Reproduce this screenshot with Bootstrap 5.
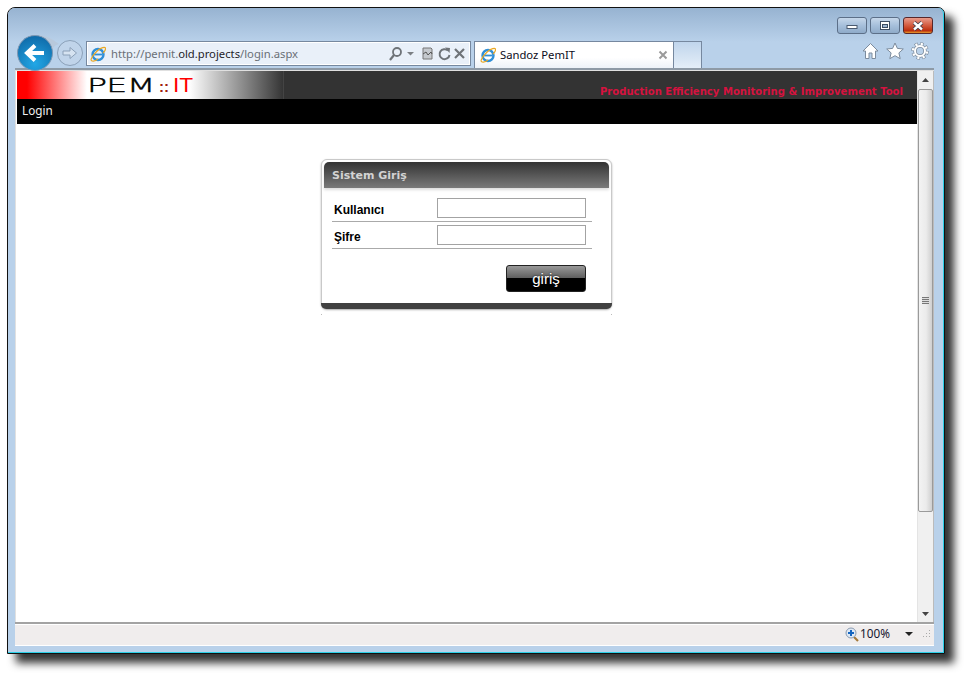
<!DOCTYPE html>
<html lang="tr"><head><meta charset="utf-8"><title>Sandoz PemIT</title>
<link rel="stylesheet" href="https://cdn.jsdelivr.net/npm/bootstrap@5.3.0/dist/css/bootstrap.min.css">
<style>
html,body{height:100%;overflow:hidden;background:#fff}
body{padding:7px 0 0 7px;font-family:"Noto Sans","Open Sans",sans-serif;font-size:12px}
.win{width:938px;height:647px;border:1px solid #111;border-radius:8px 7px 0 0;box-shadow:9px 9px 8px rgba(0,0,0,.8);background:#b9d1ea}
.win-in{height:100%;border-right:1px solid #2bd0e8;border-bottom:1px solid #2bd0e8;border-radius:7px 6px 0 0;background:linear-gradient(#97b3d1,#b9d1ea 34px);padding-left:7px;padding-right:9px}
.titlerow{height:26px;padding:9px 1px 0 0;gap:3px}
.wbtn{height:17px;width:30px;border:1px solid #5c6f88;border-radius:3px;background:linear-gradient(#c6d7ea,#a6bfdb 50%,#8fabc9)}
.wbtn-x{border-color:#57272a;background:linear-gradient(#e89b8b,#d35a3e 50%,#bb2d0d 85%,#e8a02e)}
.navrow{height:34px;padding-left:2px}
.backb{width:36px;height:36px;margin-top:1px;flex:none;z-index:3;overflow:visible}
.fwd{width:26px;height:26px;margin:6px 3px 0 4px;flex:none;z-index:2}
.addr{width:385px;height:25px;margin-top:7px;border:1px solid #76889f;background:#e9f0f9;box-shadow:inset 0 0 0 1px #fff;padding:0 4px 0 3px}
.addr-t{color:#6a6f76;font-size:11.25px;margin-left:5px;padding-top:2px}
.addr-t b{color:#1f2329;font-weight:400}
.tabx{width:200px;height:27px;margin:7px 0 0 3px;border:1px solid #76889f;border-bottom:0;background:linear-gradient(#fff,#fff 60%,#edf2f8);padding:0 5px 0 5px;color:#0b0b20;font-size:11.25px}
.tab-new{width:29px;height:27px;margin-top:7px;margin-left:-1px;border:1px solid #76889f;border-bottom:0;background:linear-gradient(#c0d5ec,#e4eef8)}
.tools{gap:7px;padding:8px 5px 0 0}
.pagerow{height:554px;border-top:2px solid #8e9aa6;padding-top:1px;background:#e0e0e0}
.pg{flex:1;background:#fff;margin-left:1px;min-width:0;padding-left:1px}
.hdr{height:28px;background:#333}
.hdr-logo{width:267px;height:28px;flex:none;background:linear-gradient(90deg,#f00 0,#f00 10px,#fff 70px,#fff 172px,#333 267px);border-right:1px solid #444;padding-left:70px}
.pem{font-family:"DejaVu Sans",sans-serif;font-weight:200;font-size:20px;line-height:28px;color:#000;display:inline-block;width:65px;white-space:nowrap;vertical-align:top}
.pem span{display:inline-block;transform:scaleX(1.66);transform-origin:0 50%;-webkit-text-stroke:.4px #000;letter-spacing:-.4px}
.dots{color:#a02010;font:700 15px/32px "Liberation Sans",sans-serif;margin-left:7px;width:14px;display:inline-block;vertical-align:top}
.it{color:#f00;font:400 21px/28px "Liberation Sans",sans-serif;display:inline-block;transform:scaleX(1.08);transform-origin:0 50%;vertical-align:top}
.slogan{color:#d6123f;font:700 10.07px/1 "DejaVu Sans",Verdana,sans-serif;padding:16px 14px 0 0}
.menu{height:25px;background:#000;color:#eee;padding:0 0 2px 5px;font-size:11.75px}
.box{width:291px;height:150px;margin:35px 0 0 304px;border:1px solid #c9c9c9;border-radius:6px;padding:2px;background:#fff;box-shadow:0 1px 2px #aaa}
.box::after{content:"";position:absolute;left:-1px;right:-1px;bottom:-7px;height:1px;background:linear-gradient(90deg,#bbb 1px,transparent 1px,transparent calc(100% - 1px),#bbb 1px)}
.box-h{height:26px;border:0;border-radius:5px 5px 0 0;background:linear-gradient(#333,#7a7a7a);color:#d3d3d3;font:700 11px/28px "DejaVu Sans",sans-serif;padding:0 8px;box-shadow:0 2px 3px #ddd}
.box-b{padding:10px 17px 0 8px;height:114px;background:transparent;border:0;flex:none}
.frow{height:27px;border-bottom:1px solid #aaa;padding-left:2px;align-items:flex-start}
.frow label{width:103px;font:700 12px/1 "Liberation Sans",sans-serif;color:#000;padding-top:6px}
.inp{width:149px;height:20px;border:1px solid #a3a3a3;border-radius:0;padding:0;min-height:0;flex:none;background:#fff}
.frow:first-child{height:24px}
.frow:nth-child(2) .inp{margin-top:3px}
.frow:nth-child(2) label{padding-top:9px}
.gobtn{display:block;margin:16px 0 0 174px;width:80px;height:27px;padding:0;border:1px solid #222;border-radius:3px;background:linear-gradient(#999,#5c5c5c 50%,#000 50%,#000);color:#fff;font:400 15px/1 "Liberation Sans",sans-serif;text-shadow:0 0 2px #000}
.box-f{height:6px;position:absolute;left:-1px;right:-1px;bottom:-1px;background:#414141;border-radius:0 0 6px 6px;border:0;padding:0}
.sbar{width:17px;background:#f0f0f0;flex:none;border-left:1px solid #e4e4e4;border-right:1px solid #bbb;align-items:center}
.sb-up{height:17px;flex:none}
.thumb{width:15px;height:423px;margin-top:1px;flex:none;border:1px solid #9a9a9a;border-radius:2px;background:linear-gradient(90deg,#f3f3f3,#ebebeb 55%,#cfcfcf)}
.grip{width:7px;height:7px;background:repeating-linear-gradient(#777 0,#777 1px,#ddd 1px,#ddd 2px)}
.status{height:24px;border-top:2px solid #a3a3a3;background:#f0eded;box-shadow:inset 0 1px 0 #fff,inset 0 -1px 0 #fff;font-size:11.75px;color:#15152f;padding:0 3px 2px 0}
.status-z{gap:1px;margin-right:15px}
.car{margin-right:8px}
</style></head><body>
<div class="win"><div class="win-in d-flex flex-column">
 <div class="titlerow d-flex justify-content-end">
  <div class="wbtn d-flex align-items-center justify-content-center"><svg width="14" height="8"><rect x="2" y="3.500" width="10" height="3" fill="#fff" stroke="#4a5a70"/></svg></div>
  <div class="wbtn d-flex align-items-center justify-content-center"><svg width="12" height="9"><rect x="1.500" y=".5" width="9" height="8" fill="#fff" stroke="#3d4d63"/><rect x="3.500" y="3.500" width="5" height="3" fill="#9db6d2" stroke="#3d4d63"/></svg></div>
  <div class="wbtn wbtn-x d-flex align-items-center justify-content-center"><svg width="14" height="10"><path d="M3 1.500 11 8.500M11 1.500 3 8.500" stroke="#3a3a4a" stroke-width="4"/><path d="M3 1.500 11 8.500M11 1.500 3 8.500" stroke="#fff" stroke-width="2.400"/></svg></div>
 </div>
 <div class="navrow d-flex align-items-start">
  <svg class="backb" viewBox="0 0 36 36"><defs><radialGradient id="bg" cx=".5" cy=".8" r=".8"><stop offset="0" stop-color="#22a7e6"/><stop offset="1" stop-color="#0f6aa8"/></radialGradient></defs><path d="M18 0C28 0 34 3 42 9 38 10 36 12 35 16z" fill="#b8c9dc"/><circle cx="18" cy="18" r="17.500" fill="url(#bg)" stroke="#7f98b3"/><path d="M27 18H12M18 10.500 10 18l8 7.500" fill="none" stroke="#fff" stroke-width="4"/></svg>
  <svg class="fwd" viewBox="0 0 26 26"><circle cx="13" cy="13" r="12.500" fill="#c0d4ea" stroke="#8ba0b8"/><path d="M6 11h7V7.500L19.500 13 13 18.500V15H6z" fill="#d6e3f1" stroke="#8ba0b8"/></svg>
  <div class="addr d-flex align-items-center">
   <svg width="16" height="16" viewBox="0 0 16 16"><circle cx="8" cy="8.500" r="5.500" fill="none" stroke="#2f8fd8" stroke-width="2.400"/><path d="M3.500 8.500h9" stroke="#2f8fd8" stroke-width="1.800"/><path d="M1 13.500C3 8 10 1 15 1.500 16.500 3 14 6 13 7M1 13.500C1 16 5 15.500 8 13" fill="none" stroke="#e9a825" stroke-width="1.200"/></svg>
   <span class="addr-t flex-grow-1">http://pemit.<b>old.projects</b>/login.aspx</span>
   <svg width="78" height="16" viewBox="0 0 78 16"><circle cx="9" cy="6" r="4" fill="none" stroke="#6e7378" stroke-width="1.800"/><path d="M6 9 2 14" stroke="#6e7378" stroke-width="2.200"/><path d="M19 6h7l-3.500 3.500z" fill="#7b7f84"/><path d="M35 2h8l1 1v10h-9z" fill="#c5c9ce" stroke="#777"/><path d="M35 8l3-2 2 3 3-3 1 2" fill="none" stroke="#555"/><path d="M60 4.500A5 5 0 1 0 61.500 9" fill="none" stroke="#6e7378" stroke-width="2"/><path d="M57 1.500l5 .5-.5 5z" fill="#6e7378"/><path d="M67 3l9 9M76 3l-9 9" stroke="#6e7378" stroke-width="2.200"/></svg>
  </div>
  <div class="tabx d-flex align-items-center">
   <svg width="16" height="16" viewBox="0 0 16 16"><circle cx="8" cy="8.500" r="5.500" fill="none" stroke="#2f8fd8" stroke-width="2.400"/><path d="M3.500 8.500h9" stroke="#2f8fd8" stroke-width="1.800"/><path d="M1 13.500C3 8 10 1 15 1.500 16.500 3 14 6 13 7M1 13.500C1 16 5 15.500 8 13" fill="none" stroke="#e9a825" stroke-width="1.200"/></svg>
   <span class="ms-1 flex-grow-1">Sandoz PemIT</span>
   <svg width="10" height="10" viewBox="0 0 10 10"><path d="M1.500 1.500l7 7M8.500 1.500l-7 7" stroke="#9a9a9a" stroke-width="2"/></svg>
  </div>
  <div class="tab-new"></div>
  <div class="tools d-flex ms-auto">
   <svg width="17" height="18" viewBox="0 0 17 18"><path d="M8.500 1.500 1 9h2.500v7.500h3.500V11h3v5.500h3.500V9H16z" fill="#fff" stroke="#7c8b9c"/></svg>
   <svg width="18" height="18" viewBox="0 0 18 18"><path d="M9 1l2.400 5.400 5.900.6-4.400 3.900 1.300 5.800L9 13.700l-5.200 3 1.300-5.800L.7 7l5.900-.6z" fill="#fff" stroke="#7c8b9c"/></svg>
   <svg width="18" height="18" viewBox="0 0 18 18" fill="none"><circle cx="9" cy="9" r="7" stroke="#7c8b9c" stroke-width="3.600" stroke-dasharray="3.200 2.300"/><circle cx="9" cy="9" r="5" stroke="#7c8b9c" stroke-width="3.600"/><circle cx="9" cy="9" r="7" stroke="#fff" stroke-width="2.400" stroke-dasharray="2.200 3.300" stroke-dashoffset="-.5"/><circle cx="9" cy="9" r="5" stroke="#fff" stroke-width="2"/></svg>
  </div>
 </div>
 <div class="pagerow d-flex">
  <div class="pg">
   <div class="hdr d-flex justify-content-between">
    <div class="hdr-logo text-nowrap"><span class="pem"><span>PEM</span></span><span class="dots">::</span><span class="it">IT</span></div>
    <div class="slogan text-nowrap">Production Efficiency Monitoring &amp; Improvement Tool</div>
   </div>
   <nav class="menu navbar d-flex align-items-center justify-content-start">Login</nav>
   <form class="card box">
    <div class="card-header box-h">Sistem Giriş</div>
    <div class="card-body box-b">
     <div class="frow d-flex"><label for="u">Kullanıcı</label><input id="u" class="form-control inp" type="text"></div>
     <div class="frow d-flex"><label for="p">Şifre</label><input id="p" class="form-control inp" type="password"></div>
     <button type="button" class="btn gobtn">giriş</button>
    </div>
    <div class="card-footer box-f"></div>
   </form>
  </div>
  <div class="sbar d-flex flex-column">
   <div class="sb-up d-flex align-items-center justify-content-center"><svg width="7" height="4"><path d="M3.500 0l3.500 4H0z" fill="#444"/></svg></div>
   <div class="thumb d-flex align-items-center justify-content-center"><div class="grip"></div></div>
   <div class="flex-grow-1"></div>
   <div class="sb-up d-flex align-items-center justify-content-center"><svg width="7" height="4"><path d="M3.500 4l3.500-4H0z" fill="#444"/></svg></div>
  </div>
 </div>
 <div class="status d-flex align-items-center justify-content-end">
  <div class="status-z d-flex align-items-center"><svg width="14" height="15" viewBox="0 0 14 15"><path d="M9 10l4 4" stroke="#a57a3a" stroke-width="2.200"/><circle cx="6" cy="6" r="5" fill="#dfe9f5" stroke="#8a9bb0"/><path d="M3 6h6M6 3v6" stroke="#1565c0" stroke-width="2"/></svg><span>100%</span></div>
  <svg class="car" width="8" height="4"><path d="M0 0h8L4 4z" fill="#222"/></svg>
  <svg width="10" height="10" viewBox="0 0 10 10"><path d="M8 1h1v1H8zM5 4h1v1H5zM8 4h1v1H8zM2 7h1v1H2zM5 7h1v1H5zM8 7h1v1H8z" fill="#aaa"/></svg>
 </div>
</div></div>
<script src="https://cdn.jsdelivr.net/npm/bootstrap@5.3.0/dist/js/bootstrap.bundle.min.js"></script>
</body></html>
